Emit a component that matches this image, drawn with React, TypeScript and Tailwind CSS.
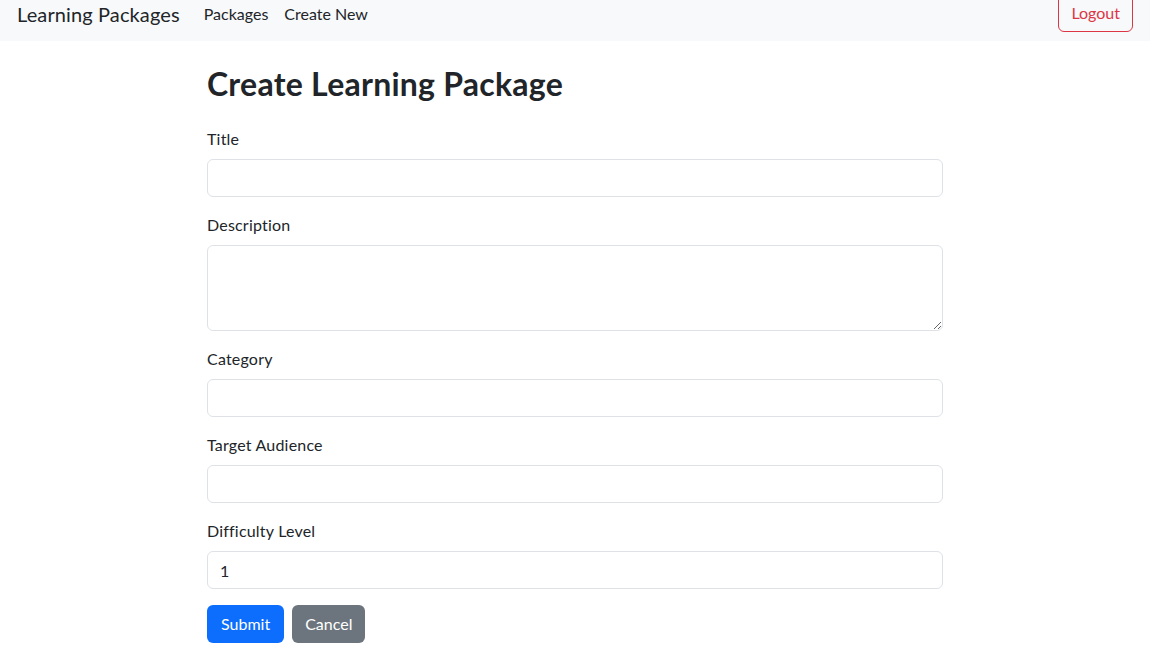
import React from 'react'

const Field = ({ label, children }: { label: string; children: React.ReactNode }) => (
  <div className="mb-4">
    <label className="block mb-2 text-base leading-6 tracking-[0.2px] text-[#212529]">{label}</label>
    {children}
  </div>
)

const inputCls =
  'block w-full h-[38px] px-3 text-base text-[#212529] bg-white border border-[#dee2e6] rounded-md outline-none'

export default function App() {
  return (
    <div className="min-h-screen bg-white text-[#212529] font-['Lato','Liberation_Sans',sans-serif]">
      <nav className="h-[41px] bg-[#f8f9fa] flex items-end justify-between pl-[17px] pr-[17px] pb-[9px] overflow-hidden">
        <div className="flex items-center self-center -mt-[5px]">
          <span className="text-xl tracking-[0.12px] mr-6 text-[#212529]">Learning Packages</span>
          <a className="text-base text-[#212529] mr-4">Packages</a>
          <a className="text-base text-[#212529]">Create New</a>
        </div>
        <button className="h-[38px] px-3 text-base text-[#dc3545] border border-[#dc3545] rounded-md">
          Logout
        </button>
      </nav>
      <main className="w-[736px] mx-auto pt-[24px]">
        <h1 className="text-[32px] font-bold leading-[38px] tracking-[0.25px] mb-6">Create Learning Package</h1>
        <Field label="Title">
          <input className={inputCls} />
        </Field>
        <Field label="Description">
          <textarea className="block w-full h-[86px] px-3 py-1.5 text-base bg-white border border-[#dee2e6] rounded-md outline-none" />
        </Field>
        <Field label="Category">
          <input className={inputCls} />
        </Field>
        <Field label="Target Audience">
          <input className={inputCls} />
        </Field>
        <Field label="Difficulty Level">
          <input className={inputCls} defaultValue="1" />
        </Field>
        <div className="flex gap-2">
          <button className="h-[38px] px-[14px] text-base text-white bg-[#0d6efd] rounded-md">Submit</button>
          <button className="h-[38px] px-[13px] text-base text-white bg-[#6c757d] rounded-md">Cancel</button>
        </div>
      </main>
    </div>
  )
}
